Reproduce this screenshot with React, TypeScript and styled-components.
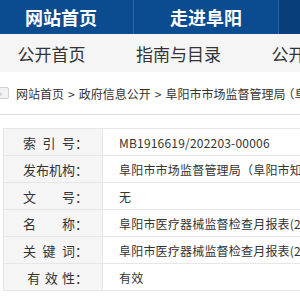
import React from "react";
import styled, { createGlobalStyle } from "styled-components";

const GlobalStyle = createGlobalStyle`
  html, body {
    margin: 0;
    padding: 0;
    background: #fff;
    overflow: hidden;
  }
  body {
    font-family: "Noto Sans CJK SC", "Noto Sans", sans-serif;
    color: #333;
  }
`;

const Page = styled.div`
  width: 300px;
  overflow: hidden;
`;

const TopNav = styled.nav`
  display: flex;
  height: 34px;
  background: #0b4c90;
  margin-left: -11px;
  width: 700px;
`;

const TopItem = styled.a<{ $dark?: boolean }>`
  flex: 0 0 144px;
  display: flex;
  align-items: center;
  justify-content: center;
  color: #fff;
  font-size: 18px;
  font-weight: bold;
  text-decoration: none;
  border-right: 1px solid #2c66a6;
  background: ${(p) => (p.$dark ? "#083e7a" : "transparent")};
`;

const SubNav = styled.nav`
  display: flex;
  height: 38px;
  background: #f5f5f5;
  margin-left: -12px;
  width: 700px;
`;

const SubItem = styled.a`
  flex: 0 0 127px;
  display: flex;
  align-items: center;
  justify-content: center;
  font-size: 17px;
  color: #333;
  text-decoration: none;
`;

const Crumbs = styled.div`
  display: flex;
  align-items: center;
  gap: 7px;
  height: 42px;
  border-bottom: 1px solid #dcdcdc;
  font-size: 12px;
  white-space: nowrap;
  color: #333;
`;

const CrumbIcon = styled.span`
  display: inline-flex;
  align-items: center;
  justify-content: center;
  flex: 0 0 auto;
  width: 16px;
  height: 10px;
  margin-left: -9px;
  border: 1px solid #cfcfcf;
  border-radius: 2px;
  background: #f3f3f3;
  color: #b0b0b0;
  font-size: 9px;
  line-height: 1;
`;

const Sep = styled.span`
  margin: 0 4px;
`;

const Paren = styled.span`
  margin-left: -3px;
`;

const Table = styled.table`
  margin: 13px 0 0 3px;
  border-collapse: collapse;
  width: 420px;
  font-size: 13px;
`;

const Row = styled.tr`
  height: 27px;
`;

const Label = styled.td`
  width: 84px;
  background: #f5f5f5;
  border: 1px solid #e6e6e6;
  text-align: right;
  padding: 0 14px 0 0;
  white-space: pre;
`;

const Value = styled.td`
  background: #fff;
  border: 1px solid #e6e6e6;
  padding: 0 0 0 16px;
  font-size: 12px;
  letter-spacing: 0.2px;
  white-space: nowrap;
`;

const rows: [string, string][] = [
  ["索\u2002引\u2002号：", "MB1916619/202203-00006"],
  ["发布机构：", "阜阳市市场监督管理局（阜阳市知识产权局）"],
  ["文\u3000\u3000号：", "无"],
  ["名\u3000\u3000称：", "阜阳市医疗器械监督检查月报表(2月份)"],
  ["关\u2002键\u2002词：", "阜阳市医疗器械监督检查月报表(2月份)"],
  ["有\u2004效\u2004性：", "有效"],
];

export default function App() {
  return (
    <Page>
      <GlobalStyle />
      <TopNav>
        <TopItem href="#">网站首页</TopItem>
        <TopItem href="#">走进阜阳</TopItem>
        <TopItem href="#" $dark>
          政务公开
        </TopItem>
      </TopNav>
      <SubNav>
        <SubItem href="#">公开首页</SubItem>
        <SubItem href="#">指南与目录</SubItem>
        <SubItem href="#">公开年报</SubItem>
      </SubNav>
      <Crumbs>
        <CrumbIcon>»</CrumbIcon>
        <span>
          网站首页<Sep>&gt;</Sep>政府信息公开<Sep>&gt;</Sep>阜阳市市场监督管理局
          <Paren>（阜阳市知识产权局）</Paren>
        </span>
      </Crumbs>
      <Table>
        <tbody>
          {rows.map(([k, v]) => (
            <Row key={k}>
              <Label>{k}</Label>
              <Value>{v}</Value>
            </Row>
          ))}
        </tbody>
      </Table>
    </Page>
  );
}
